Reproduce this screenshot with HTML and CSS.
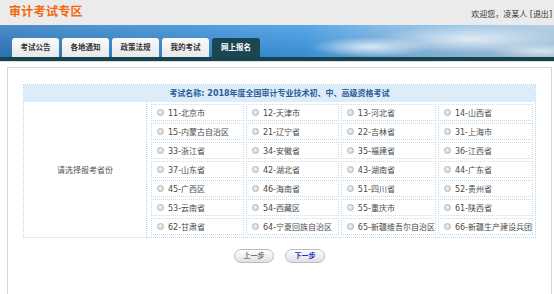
FILE: index.html
```html
<!DOCTYPE html>
<html lang="zh-CN">
<head>
  <meta charset="UTF-8" />
  <title>审计考试专区</title>
  <link rel="stylesheet" href="styles.css">
</head>
<body>
  <header class="top">
    <h1 class="logo">审计考试专区</h1>
    <div class="user">欢迎您，凌某人 [<a href="#">退出</a>]</div>
  </header>

  <div class="banner">
    <nav class="tabs">
      <a href="#" class="tab">考试公告</a>
      <a href="#" class="tab">各地通知</a>
      <a href="#" class="tab">政策法规</a>
      <a href="#" class="tab">我的考试</a>
      <a href="#" class="tab active">网上报名</a>
    </nav>
  </div>
  <div class="bar"></div>

  <div class="main">
    <div class="box">
      <div class="exam">
        <div class="exam-title">考试名称: 2018年度全国审计专业技术初、中、高级资格考试</div>
        <div class="exam-body">
          <div class="label">请选择报考省份</div>
          <div class="provinces">
            <label class="prov"><span class="radio"></span>11-北京市</label>
            <label class="prov"><span class="radio"></span>12-天津市</label>
            <label class="prov"><span class="radio"></span>13-河北省</label>
            <label class="prov"><span class="radio"></span>14-山西省</label>
            <label class="prov"><span class="radio"></span>15-内蒙古自治区</label>
            <label class="prov"><span class="radio"></span>21-辽宁省</label>
            <label class="prov"><span class="radio"></span>22-吉林省</label>
            <label class="prov"><span class="radio"></span>31-上海市</label>
            <label class="prov"><span class="radio"></span>33-浙江省</label>
            <label class="prov"><span class="radio"></span>34-安徽省</label>
            <label class="prov"><span class="radio"></span>35-福建省</label>
            <label class="prov"><span class="radio"></span>36-江西省</label>
            <label class="prov"><span class="radio"></span>37-山东省</label>
            <label class="prov"><span class="radio"></span>42-湖北省</label>
            <label class="prov"><span class="radio"></span>43-湖南省</label>
            <label class="prov"><span class="radio"></span>44-广东省</label>
            <label class="prov"><span class="radio"></span>45-广西区</label>
            <label class="prov"><span class="radio"></span>46-海南省</label>
            <label class="prov"><span class="radio"></span>51-四川省</label>
            <label class="prov"><span class="radio"></span>52-贵州省</label>
            <label class="prov"><span class="radio"></span>53-云南省</label>
            <label class="prov"><span class="radio"></span>54-西藏区</label>
            <label class="prov"><span class="radio"></span>55-重庆市</label>
            <label class="prov"><span class="radio"></span>61-陕西省</label>
            <label class="prov"><span class="radio"></span>62-甘肃省</label>
            <label class="prov"><span class="radio"></span>64-宁夏回族自治区</label>
            <label class="prov"><span class="radio"></span>65-新疆维吾尔自治区</label>
            <label class="prov"><span class="radio"></span>66-新疆生产建设兵团</label>
          </div>
        </div>
      </div>

      <div class="actions">
        <button class="btn">上一步</button>
        <button class="btn next">下一步</button>
      </div>
    </div>
  </div>
</body>
</html>
```

FILE: styles.css
```css
body {
  margin: 0;
  font-family: "DejaVu Sans", "Noto Sans CJK SC", sans-serif;
  font-size: 8px;
  color: #444;
  background: #fff;
}
.top {
  height: 25px;
  display: flex;
  justify-content: space-between;
  align-items: flex-start;
  background: #ebebeb;
}
.logo {
  margin: 5px 0 0 9px;
  font-size: 12px;
  line-height: 14px;
  color: #f0680c;
  font-weight: bold;
  letter-spacing: 0.3px;
}
.user {
  margin: 9px 2px 0 0;
  font-size: 8px;
  line-height: 11px;
  color: #333;
}
.user a {
  color: #333;
  text-decoration: none;
}
.banner {
  height: 32px;
  display: flex;
  align-items: flex-end;
  background:
    radial-gradient(ellipse 60px 10px at 370px 22px, rgba(255,255,255,0.75), rgba(255,255,255,0) 100%),
    radial-gradient(ellipse 90px 14px at 470px 14px, rgba(255,255,255,0.7), rgba(255,255,255,0) 100%),
    radial-gradient(ellipse 50px 8px at 540px 26px, rgba(255,255,255,0.6), rgba(255,255,255,0) 100%),
    linear-gradient(180deg, rgba(255,255,255,0.15), rgba(0,0,0,0.08)),
    linear-gradient(90deg, #2e79c0 0%, #3589d2 30%, #3d98e4 55%, #7fb6e2 72%, #a9c9e2 100%);
}
.tabs {
  display: flex;
  gap: 3px;
  padding-left: 12px;
}
.tab {
  width: 47px;
  height: 19px;
  line-height: 20px;
  text-align: center;
  background: linear-gradient(#fafafa, #e8e8e8);
  border-radius: 3px 3px 0 0;
  color: #333;
  font-weight: bold;
  font-size: 7.5px;
  text-decoration: none;
}
.tab.active {
  width: 48px;
  background: #1a4752;
  color: #fff;
}
.bar {
  height: 4px;
  background: #17434e;
  border-bottom: 1px solid #d8dde0;
}
.main {
  padding: 5px 2px 0 7px;
}
.box {
  border: 1px solid #d6d6d6;
  border-bottom: none;
  height: 210px;
  padding: 16px 15px 0 15px;
}
.exam {
  border: 1px dotted #b9d5ea;
}
.exam-title {
  height: 17px;
  line-height: 17px;
  text-align: center;
  background: #dcecf9;
  color: #2a5d94;
  font-weight: bold;
}
.exam-body {
  display: flex;
}
.label {
  width: 122px;
  border-right: 1px dotted #b9d5ea;
  display: flex;
  align-items: center;
  justify-content: center;
  color: #555;
}
.provinces {
  flex: 1;
  display: grid;
  grid-template-columns: repeat(4, 1fr);
  gap: 2px;
  padding: 2px 2px 2px 4px;
}
.prov {
  height: 15px;
  border: 1px dotted #c9dced;
  display: flex;
  align-items: center;
  gap: 4px;
  padding-left: 5px;
  color: #4a4a4a;
  white-space: nowrap;
}
.radio {
  width: 5px;
  height: 5px;
  border-radius: 50%;
  border: 1px solid #b4b4b4;
  background: radial-gradient(circle at 40% 40%, #f2f2f2, #cfcfcf);
}
.actions {
  display: flex;
  justify-content: center;
  gap: 11px;
  margin-top: 11px;
}
.btn {
  width: 40px;
  height: 14px;
  padding: 0;
  border: 1px solid #bcbcbc;
  border-radius: 7px;
  background: linear-gradient(#ffffff, #e0e0e0);
  font-family: "DejaVu Sans", "Noto Sans CJK SC", sans-serif;
  font-size: 7px;
  font-weight: bold;
  color: #777;
  line-height: 12px;
}
.btn.next {
  color: #2233cc;
}
```
